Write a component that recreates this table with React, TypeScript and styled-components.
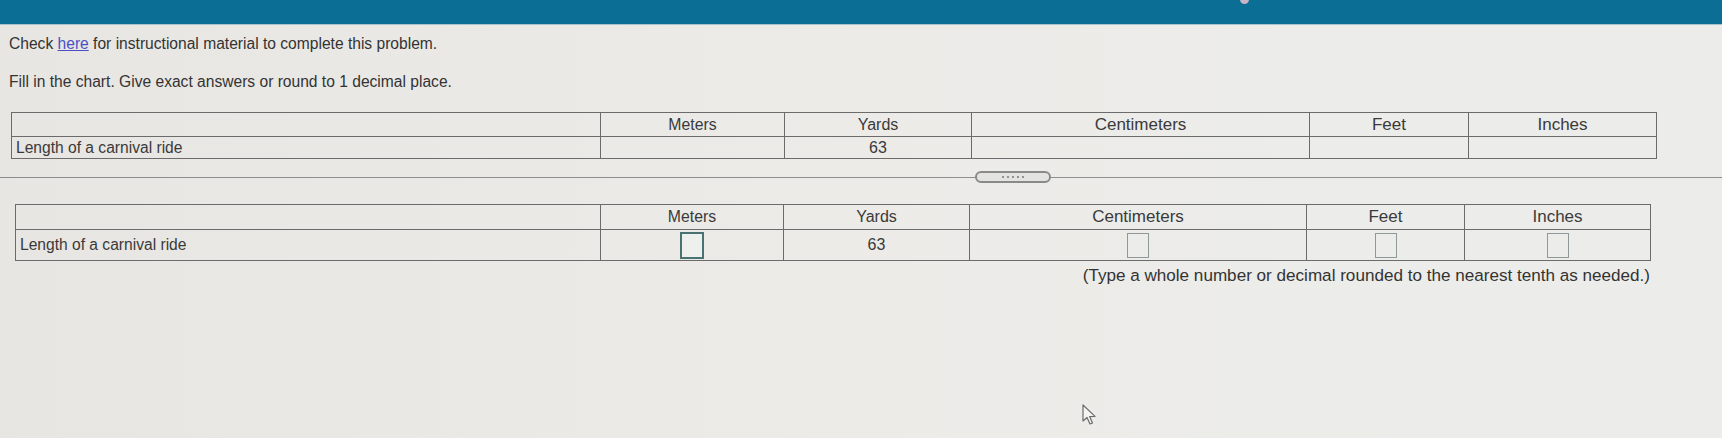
import React from "react";
import styled, { createGlobalStyle } from "styled-components";

const GlobalStyle = createGlobalStyle`
  html, body { margin: 0; padding: 0; }
  body {
    background: #e9e8e5;
    font-family: "Liberation Sans", Arial, sans-serif;
    color: #3a3a3a;
    width: 1722px;
    height: 438px;
    overflow: hidden;
  }
`;

const Page = styled.div`
  position: relative;
  width: 1722px;
  height: 438px;
  background: linear-gradient(90deg, #e8e6e2 0%, #ecebe8 50%, #ecedeb 100%);
`;

const TopBar = styled.div`
  position: relative;
  height: 24px;
  background: #0b6f95;
  border-bottom: 1px solid #a9c2cb;
`;

const BarDot = styled.div`
  position: absolute;
  left: 1240px;
  top: -5px;
  width: 9px;
  height: 9px;
  border-radius: 50%;
  background: #c9b3c4;
`;

const Content = styled.div`
  display: flex;
  flex-direction: column;
  padding-top: 10px;
`;

const Para = styled.p<{ $mb: number }>`
  margin: 0 0 ${(p) => p.$mb}px 9px;
  font-size: 15.6px;
  line-height: 18px;
  color: #333;
`;

const Link = styled.a`
  color: #4b4fc6;
  text-decoration: underline;
  cursor: pointer;
`;

const Grid = styled.div<{ $cols: string; $left: number; $rows: string }>`
  display: grid;
  grid-template-columns: ${(p) => p.$cols};
  grid-template-rows: ${(p) => p.$rows};
  margin-left: ${(p) => p.$left}px;
  width: max-content;
  border-top: 1px solid #6b6b6b;
  border-left: 1px solid #6b6b6b;
`;

const Cell = styled.div<{ $align?: "left" | "center"; $size?: number }>`
  display: flex;
  align-items: center;
  justify-content: ${(p) => (p.$align === "left" ? "flex-start" : "center")};
  padding: 0 ${(p) => (p.$align === "left" ? "4px" : "0")};
  border-right: 1px solid #6b6b6b;
  border-bottom: 1px solid #6b6b6b;
  font-size: ${(p) => p.$size ?? 15.6}px;
  color: #3a3a3a;
  box-sizing: border-box;
  overflow: hidden;
  white-space: nowrap;
`;

const Separator = styled.div`
  position: relative;
  height: 10px;
  margin: 13px 0 22px 0;
  display: flex;
  align-items: center;
`;

const SepLine = styled.div`
  flex: 1;
  height: 1px;
  background: #8e8e8e;
`;

const Pill = styled.div`
  position: absolute;
  left: 975px;
  top: -1px;
  width: 76px;
  height: 12px;
  box-sizing: border-box;
  border: 2px solid #8a8a8a;
  border-radius: 6px;
  background: #e3e3e1;
  display: flex;
  align-items: center;
  justify-content: center;
  gap: 3px;
`;

const Dot = styled.span`
  width: 2px;
  height: 2px;
  border-radius: 50%;
  background: #777;
`;

const InputBox = styled.div<{ $focused?: boolean }>`
  width: ${(p) => (p.$focused ? 24 : 22)}px;
  height: ${(p) => (p.$focused ? 27 : 25)}px;
  box-sizing: border-box;
  border: ${(p) => (p.$focused ? "2.5px solid #4a7273" : "1px solid #8d9899")};
  background: ${(p) => (p.$focused ? "#eef0ee" : "#ecedeb")};
`;

const Note = styled.div`
  width: 1650px;
  text-align: right;
  font-size: 17.1px;
  line-height: 20px;
  margin-top: 5px;
  color: #333;
`;

const Cursor = styled.svg`
  position: absolute;
  left: 1081px;
  top: 404px;
`;

const cols1 = "589px 184px 187px 338px 159px 188px";
const cols2 = "585px 183px 186px 337px 158px 186px";
const units: [string, number][] = [
  ["Meters", 15.8],
  ["Yards", 16],
  ["Centimeters", 17],
  ["Feet", 17],
  ["Inches", 17],
];

export default function App() {
  return (
    <Page>
      <GlobalStyle />
      <TopBar>
        <BarDot />
      </TopBar>
      <Content>
        <Para $mb={20}>
          Check <Link>here</Link> for instructional material to complete this problem.
        </Para>
        <Para $mb={21}>Fill in the chart. Give exact answers or round to 1 decimal place.</Para>

        <Grid $cols={cols1} $left={11} $rows="24px 22px">
          <Cell $align="left" />
          {units.map(([u, s]) => (
            <Cell key={u} $size={s}>
              {u}
            </Cell>
          ))}
          <Cell $align="left">Length of a carnival ride</Cell>
          <Cell />
          <Cell $size={16}>63</Cell>
          <Cell />
          <Cell />
          <Cell />
        </Grid>

        <Separator>
          <SepLine />
          <Pill>
            <Dot />
            <Dot />
            <Dot />
            <Dot />
            <Dot />
          </Pill>
        </Separator>

        <Grid $cols={cols2} $left={15} $rows="25px 31px">
          <Cell $align="left" />
          {units.map(([u, s]) => (
            <Cell key={u} $size={s}>
              {u}
            </Cell>
          ))}
          <Cell $align="left">Length of a carnival ride</Cell>
          <Cell>
            <InputBox $focused />
          </Cell>
          <Cell $size={16}>63</Cell>
          <Cell>
            <InputBox />
          </Cell>
          <Cell>
            <InputBox />
          </Cell>
          <Cell>
            <InputBox />
          </Cell>
        </Grid>
        <Note>(Type a whole number or decimal rounded to the nearest tenth as needed.)</Note>
      </Content>
      <Cursor width="18" height="22" viewBox="0 0 18 22">
        <path
          d="M2 1 L2 17 L6 13.5 L9 20 L11.5 19 L8.6 12.6 L14 12.4 Z"
          fill="#f4f4f2"
          stroke="#6d6d6d"
          strokeWidth="1.2"
          strokeLinejoin="round"
        />
      </Cursor>
    </Page>
  );
}
